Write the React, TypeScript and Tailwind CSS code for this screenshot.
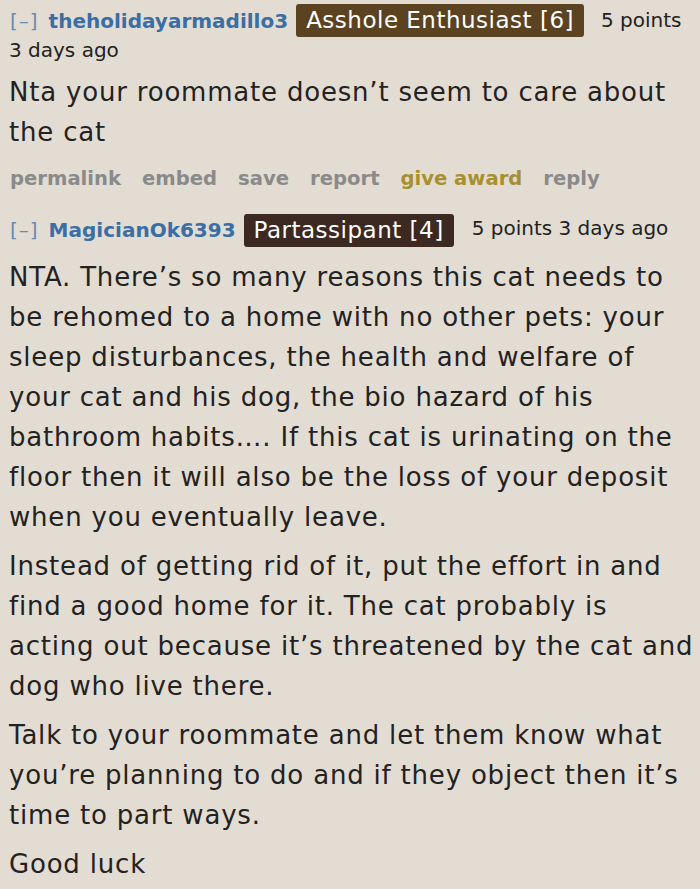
import React from "react";

const F = { fontFamily: '"DejaVu Sans", Verdana, sans-serif' };

function Badge({ text, dark }: { text: string; dark?: boolean }) {
  return (
    <span
      className={
        "inline-block rounded-[3px] px-[10px] text-[23px] leading-[33px] tracking-[0.5px] text-white " +
        (dark ? "bg-[#3c2a22]" : "bg-[#5b4220]")
      }
    >
      {text}
    </span>
  );
}

export default function App() {
  return (
    <div className="min-h-[889px] w-[700px] bg-[#e3dcd3] text-[#222222]" style={F}>
      <div className="pl-[9px] pr-[4px]">
        {/* Comment 1 */}
        <div className="flex items-start pt-[4px]">
          <span className="ml-[1px] mt-[5px] text-[20px] leading-[24px] tracking-[1px] text-[#6a8bb0]">[–]</span>
          <span className="ml-[10px] mt-[5px] text-[20px] font-bold leading-[24px] text-[#3a6ea5]">
            theholidayarmadillo3
          </span>
          <span className="ml-[8px]">
            <Badge text="Asshole Enthusiast [6]" />
          </span>
          <span className="ml-[17px] mt-[4px] text-[20px] leading-[24px]">5 points</span>
        </div>
        <div className="mt-[1px] text-[20px] leading-[24px]">3 days ago</div>
        <div className="mt-[10px] text-[26px] leading-[40px] tracking-[0.8px]">
          Nta your roommate doesn’t seem to care about the cat
        </div>
        <div className="mt-[15px] flex gap-[21px] pl-[1px] text-[19.6px] font-bold leading-[24px] text-[#8a8a8a]">
          <span>permalink</span>
          <span>embed</span>
          <span>save</span>
          <span>report</span>
          <span className="text-[#a8902e]">give award</span>
          <span>reply</span>
        </div>

        {/* Comment 2 */}
        <div className="mt-[23px] flex items-start">
          <span className="ml-[1px] mt-[4px] text-[20px] leading-[24px] tracking-[1px] text-[#6a8bb0]">[–]</span>
          <span className="ml-[10px] mt-[4px] text-[20px] font-bold leading-[24px] text-[#3a6ea5]">
            MagicianOk6393
          </span>
          <span className="ml-[8px]">
            <Badge text="Partassipant [4]" dark />
          </span>
          <span className="ml-[18px] mt-[2px] text-[20px] leading-[24px]">5 points 3 days ago</span>
        </div>
        <div className="mt-[10px] text-[26px] leading-[40px] tracking-[0.8px]">
          <p>
            NTA. There’s so many reasons this cat needs to be rehomed to a home with no other pets:
            your sleep disturbances, the health and welfare of your cat and his dog, the bio hazard
            of his bathroom habits…. If this cat is urinating on the floor then it will also be the
            loss of your deposit when you eventually leave.
          </p>
          <p className="mt-[9px]">
            Instead of getting rid of it, put the effort in and find a good home for it. The cat
            probably is acting out because it’s threatened by the cat and dog who live there.
          </p>
          <p className="mt-[9px]">
            Talk to your roommate and let them know what you’re planning to do and if they object
            then it’s time to part ways.
          </p>
          <p className="mt-[9px]">Good luck</p>
        </div>
      </div>
    </div>
  );
}
